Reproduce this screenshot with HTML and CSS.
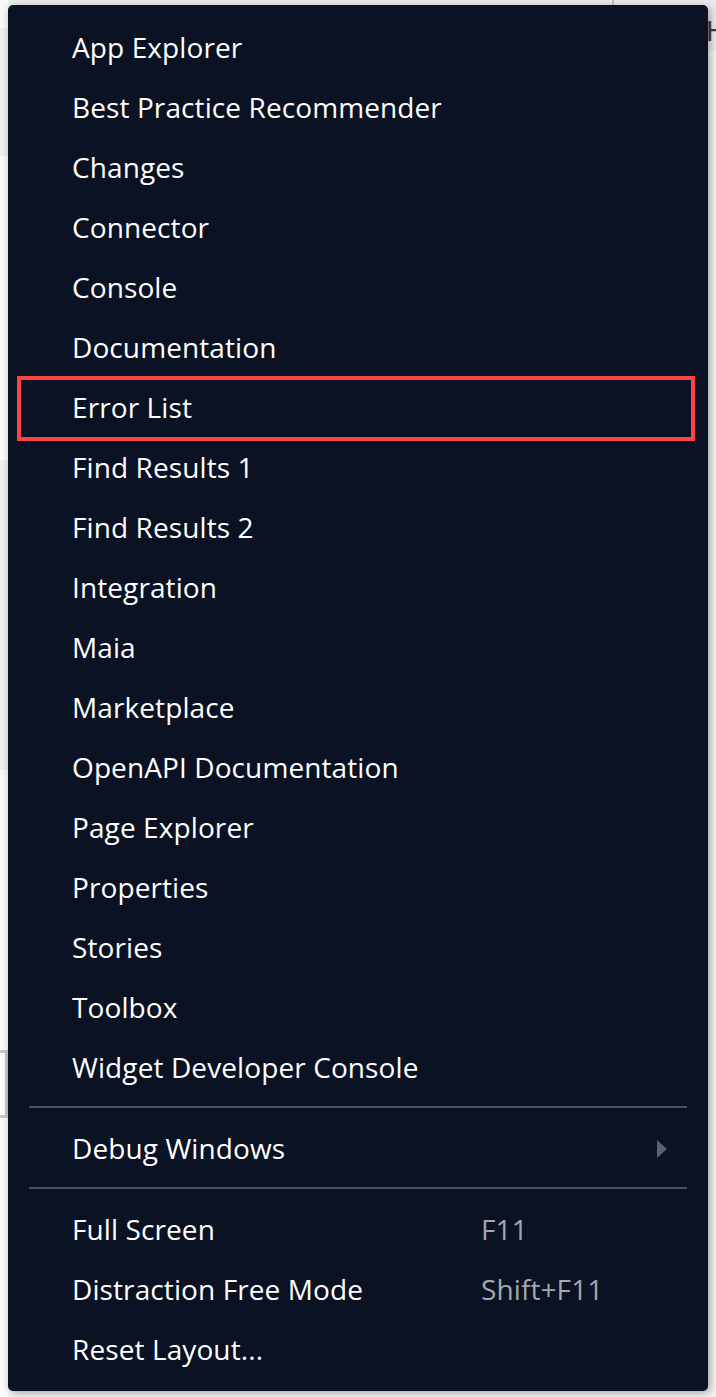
FILE: index.html
```html
<!DOCTYPE html>
<html>
<head>
<meta charset="utf-8">
<link rel="stylesheet" href="styles.css">
</head>
<body>
<div class="page">
  <div class="side side-left">
    <div class="band b1"></div>
    <div class="band b2"></div>
    <div class="band b3"></div>
    <div class="band b4"></div>
    <div class="band b5"></div>
    <div class="band b6"></div>
    <div class="band b7"></div>
  </div>
  <div class="center">
    <div class="topstrip"><div class="vline"></div></div>
  </div>
  <div class="side side-right">
    <div class="rtop"><span class="hletter">H</span></div>
    <div class="rrest"></div>
  </div>
</div>

<div class="menu">
  <ul class="group">
    <li class="item">App Explorer</li>
    <li class="item">Best Practice Recommender</li>
    <li class="item">Changes</li>
    <li class="item">Connector</li>
    <li class="item">Console</li>
    <li class="item">Documentation</li>
    <li class="item highlighted">Error List<span class="redbox"></span></li>
    <li class="item">Find Results 1</li>
    <li class="item">Find Results 2</li>
    <li class="item">Integration</li>
    <li class="item">Maia</li>
    <li class="item">Marketplace</li>
    <li class="item">OpenAPI Documentation</li>
    <li class="item">Page Explorer</li>
    <li class="item">Properties</li>
    <li class="item">Stories</li>
    <li class="item">Toolbox</li>
    <li class="item">Widget Developer Console</li>
  </ul>
  <div class="sep"></div>
  <ul class="group">
    <li class="item submenu">Debug Windows
      <svg class="arrow" width="10" height="18" viewBox="0 0 10 18"><path d="M0 0 L10 9 L0 18 Z" fill="#5b616d"/></svg>
    </li>
  </ul>
  <div class="sep"></div>
  <ul class="group">
    <li class="item"><span class="label">Full Screen</span><span class="shortcut">F11</span></li>
    <li class="item"><span class="label">Distraction Free Mode</span><span class="shortcut">Shift+F11</span></li>
    <li class="item"><span class="label">Reset Layout...</span></li>
  </ul>
</div>
</body>
</html>
```

FILE: styles.css
```css
* { box-sizing: border-box; }
html, body {
  margin: 0;
  padding: 0;
  width: 716px;
  height: 1397px;
  overflow: hidden;
  background: #f7f7f7;
  font-family: "Open Sans", "Noto Sans", sans-serif;
}
.page {
  display: flex;
  width: 716px;
  height: 1397px;
}
.side-left {
  width: 8px;
  display: flex;
  flex-direction: column;
}
.band.b1 { height: 28px; background: #f9f9f9; }
.band.b2 { height: 128px; background: #efefef; }
.band.b3 { height: 304px; background: #fbfbfb; }
.band.b4 { height: 310px; background: #f0f0f0; }
.band.b5 { height: 280px; background: #fafafa; }
.band.b6 { height: 68px; background: #ffffff; border: 3px solid #c9c9cc; border-left: none; }
.band.b7 { flex: 1; background: #fafafa; }
.center { flex: 1; }
.topstrip {
  height: 5px;
  background: #ececec;
}
.topstrip .vline {
  margin-left: 604px;
  width: 2px;
  height: 5px;
  background: #c6c6c9;
}
.side-right {
  width: 8px;
  display: flex;
  flex-direction: column;
  overflow: hidden;
}
.rtop {
  height: 50px;
  background: #ebebeb;
  padding-top: 16px;
}
.hletter {
  display: block;
  margin-left: -2px;
  font-family: "Liberation Sans", sans-serif;
  font-size: 29px;
  line-height: 30px;
  color: #3a3d48;
}
.rrest { flex: 1; background: #f4f4f4; }

.menu {
  position: absolute;
  left: 8px;
  top: 5px;
  width: 700px;
  height: 1386px;
  background: #0a1223;
  border-radius: 5px;
  box-shadow: 2px 2px 8px rgba(0, 0, 0, 0.35);
  padding: 12px 0 11px 0;
}
.group {
  list-style: none;
  margin: 0;
  padding: 0;
}
.item {
  position: relative;
  height: 60px;
  display: flex;
  align-items: center;
  padding-left: 64px;
  color: #ffffff;
  font-size: 28px;
  letter-spacing: 0.1px;
}
.label { width: 409px; }
.shortcut { color: #a3a7ae; }
.arrow {
  position: absolute;
  left: 649px;
  top: 22px;
}
.sep {
  height: 2px;
  margin: 9px 21px 10px 21px;
  background: #4b5262;
}
.redbox {
  position: absolute;
  left: 9px;
  top: -1px;
  width: 678px;
  height: 65px;
  border: 4px solid #ff4448;
}
```
